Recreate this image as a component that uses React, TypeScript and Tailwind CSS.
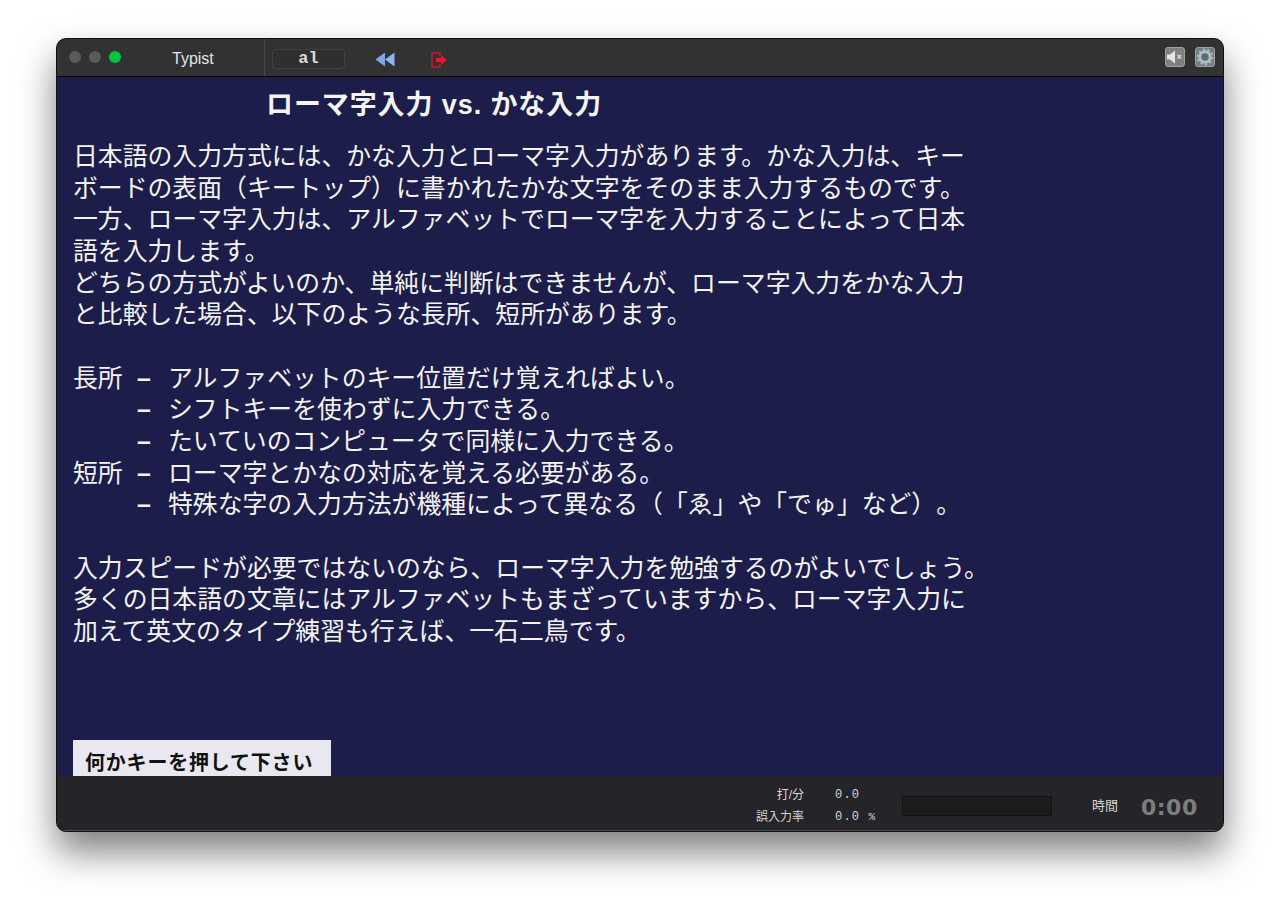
const lines1 = [
  '日本語の入力方式には、かな入力とローマ字入力があります。かな入力は、キー',
  'ボードの表面（キートップ）に書かれたかな文字をそのまま入力するものです。',
  '一方、ローマ字入力は、アルファベットでローマ字を入力することによって日本',
  '語を入力します。',
  'どちらの方式がよいのか、単純に判断はできませんが、ローマ字入力をかな入力',
  'と比較した場合、以下のような長所、短所があります。',
];

const points = [
  ['長所', 'アルファベットのキー位置だけ覚えればよい。'],
  ['', 'シフトキーを使わずに入力できる。'],
  ['', 'たいていのコンピュータで同様に入力できる。'],
  ['短所', 'ローマ字とかなの対応を覚える必要がある。'],
  ['', '特殊な字の入力方法が機種によって異なる（「ゑ」や「でゅ」など）。'],
];

const lines2 = [
  '入力スピードが必要ではないのなら、ローマ字入力を勉強するのがよいでしょう。',
  '多くの日本語の文章にはアルファベットもまざっていますから、ローマ字入力に',
  '加えて英文のタイプ練習も行えば、一石二鳥です。',
];

const jp = "font-['Liberation_Sans','Noto_Sans_CJK_JP',sans-serif]";

export default function App() {
  return (
    <div className={`w-[1280px] h-[906px] bg-white pt-[38px] pl-[56px] overflow-hidden [text-spacing-trim:space-all] ${jp}`}>
      <div className="w-[1168px] h-[794px] flex flex-col rounded-[10px] overflow-hidden bg-[#252429] border border-[#111] shadow-[0_20px_36px_rgba(0,0,0,0.5)]">
        <header className="h-[38px] shrink-0 flex bg-[#323232] border-b border-black">
          <div className="w-[208px] h-full flex items-center border-r border-[#4a4a4a]">
            <div className="flex gap-2 pl-3 -mt-[2px]">
              <span className="w-3 h-3 rounded-full bg-[#5a5a5a]" />
              <span className="w-3 h-3 rounded-full bg-[#5a5a5a]" />
              <span className="w-3 h-3 rounded-full bg-[#00c63c]" />
            </div>
            <span className="ml-[51px] mt-[3px] text-[16px] text-[#e4e4e4]">Typist</span>
          </div>
          <div className="flex items-center pt-[3px]">
            <div className="ml-[7px] w-[73px] h-[20px] flex items-center justify-center rounded-[4px] border border-[#414141] bg-[#2f2f2f] font-['Liberation_Mono',monospace] font-bold text-[17px] text-[#dcdcdc]">
              al
            </div>
            <svg className="ml-[30px] mt-[1px]" width="20" height="15" viewBox="0 0 20 15">
              <path d="M10 0.5V14.5L0.5 7.5Z" fill="#7da6e8" />
              <path d="M19.5 0.5V14.5L10 7.5Z" fill="#8fb4f0" />
            </svg>
            <svg className="ml-[36px] mt-[1px]" width="17" height="16" viewBox="0 0 17 16" fill="none">
              <path d="M9 4V1H1V15H9V12" stroke="#d81432" strokeWidth="1.3" />
              <path d="M5 6H10V3L16 8L10 13V10H5Z" fill="#f0102f" />
            </svg>
          </div>
          <div className="ml-auto mr-[8px] mt-[8px] flex gap-[10px]">
            <div className="w-5 h-5 rounded-[3px] bg-[#7f7f7f] border border-[#a0a0a0] flex items-center justify-center">
              <svg width="18" height="14" viewBox="0 0 18 14">
                <path d="M1 4.5H4L9 0.5V13.5L4 9.5H1Z" fill="#e4e4e4" />
                <path d="M11.5 5L15 8.5M15 5L11.5 8.5" stroke="#e4e4e4" strokeWidth="1.2" />
              </svg>
            </div>
            <div className="w-5 h-5 rounded-[3px] bg-[#737c7e] border border-[#a0a0a0] flex items-center justify-center">
              <svg width="18" height="18" viewBox="0 0 18 18">
                <circle cx="9" cy="9" r="5.2" fill="#5d6a6e" stroke="#a9bec5" strokeWidth="3" />
                <circle cx="9" cy="9" r="7.4" fill="none" stroke="#a9bec5" strokeWidth="2" strokeDasharray="2.2 2.45" />
              </svg>
            </div>
          </div>
        </header>

        <main className="flex-1 min-h-0 overflow-hidden bg-[#1c1d4b] text-white pl-[16px]">
          <h1 className="pl-[193px] h-[54px] pt-[9px] font-bold text-[27px] leading-[38px] tracking-[0.9px] text-[#f4f4f4]">
            ローマ字入力 vs. かな入力
          </h1>
          <div className="mt-[10px] text-[24.85px] leading-[31.65px] whitespace-nowrap text-[#f4f4f4]">
            {lines1.map(line => <div key={line}>{line}</div>)}
            <div className="h-[31.65px]" />
            {points.map(([label, text]) => (
              <div key={text} className="flex">
                <span className="w-[64px]">{label}</span>
                <span className="w-[31px] font-bold">–</span>
                <span>{text}</span>
              </div>
            ))}
            <div className="h-[31.65px]" />
            {lines2.map(line => <div key={line}>{line}</div>)}
          </div>
          <div className="mt-[93px] w-[258px] h-[50px] pl-[12px] pt-[8px] bg-[#e9e8f1] text-[#111] font-bold text-[20px] leading-[30px] tracking-[0.8px]">
            何かキーを押して下さい
          </div>
        </main>

        <footer className="h-[55px] shrink-0 flex items-center pt-[6px] bg-[#252429] border-b border-[#4a4a4c] text-[#d6d6d6]">
          <div className="ml-[699px] w-[48px] flex flex-col items-end gap-[7px] text-[12px] leading-[15px]">
            <span>打/分</span>
            <span className="whitespace-nowrap">誤入力率</span>
          </div>
          <div className="ml-[31px] w-[67px] flex flex-col gap-[7px] font-['Liberation_Mono',monospace] text-[12px] leading-[15px] tracking-[1.2px]">
            <span>0.0</span>
            <span>0.0 <span className="text-[11px]">%</span></span>
          </div>
          <div className="w-[150px] h-[20px] bg-[#1c1c1c] border border-[#111]" />
          <span className="ml-[40px] text-[13px]">時間</span>
          <span className="ml-[23px] mt-[2px] text-[22px] font-bold tracking-[0.5px] text-[#7d7d7d] font-['DejaVu_Sans',sans-serif]">0:00</span>
        </footer>
      </div>
    </div>
  );
}
